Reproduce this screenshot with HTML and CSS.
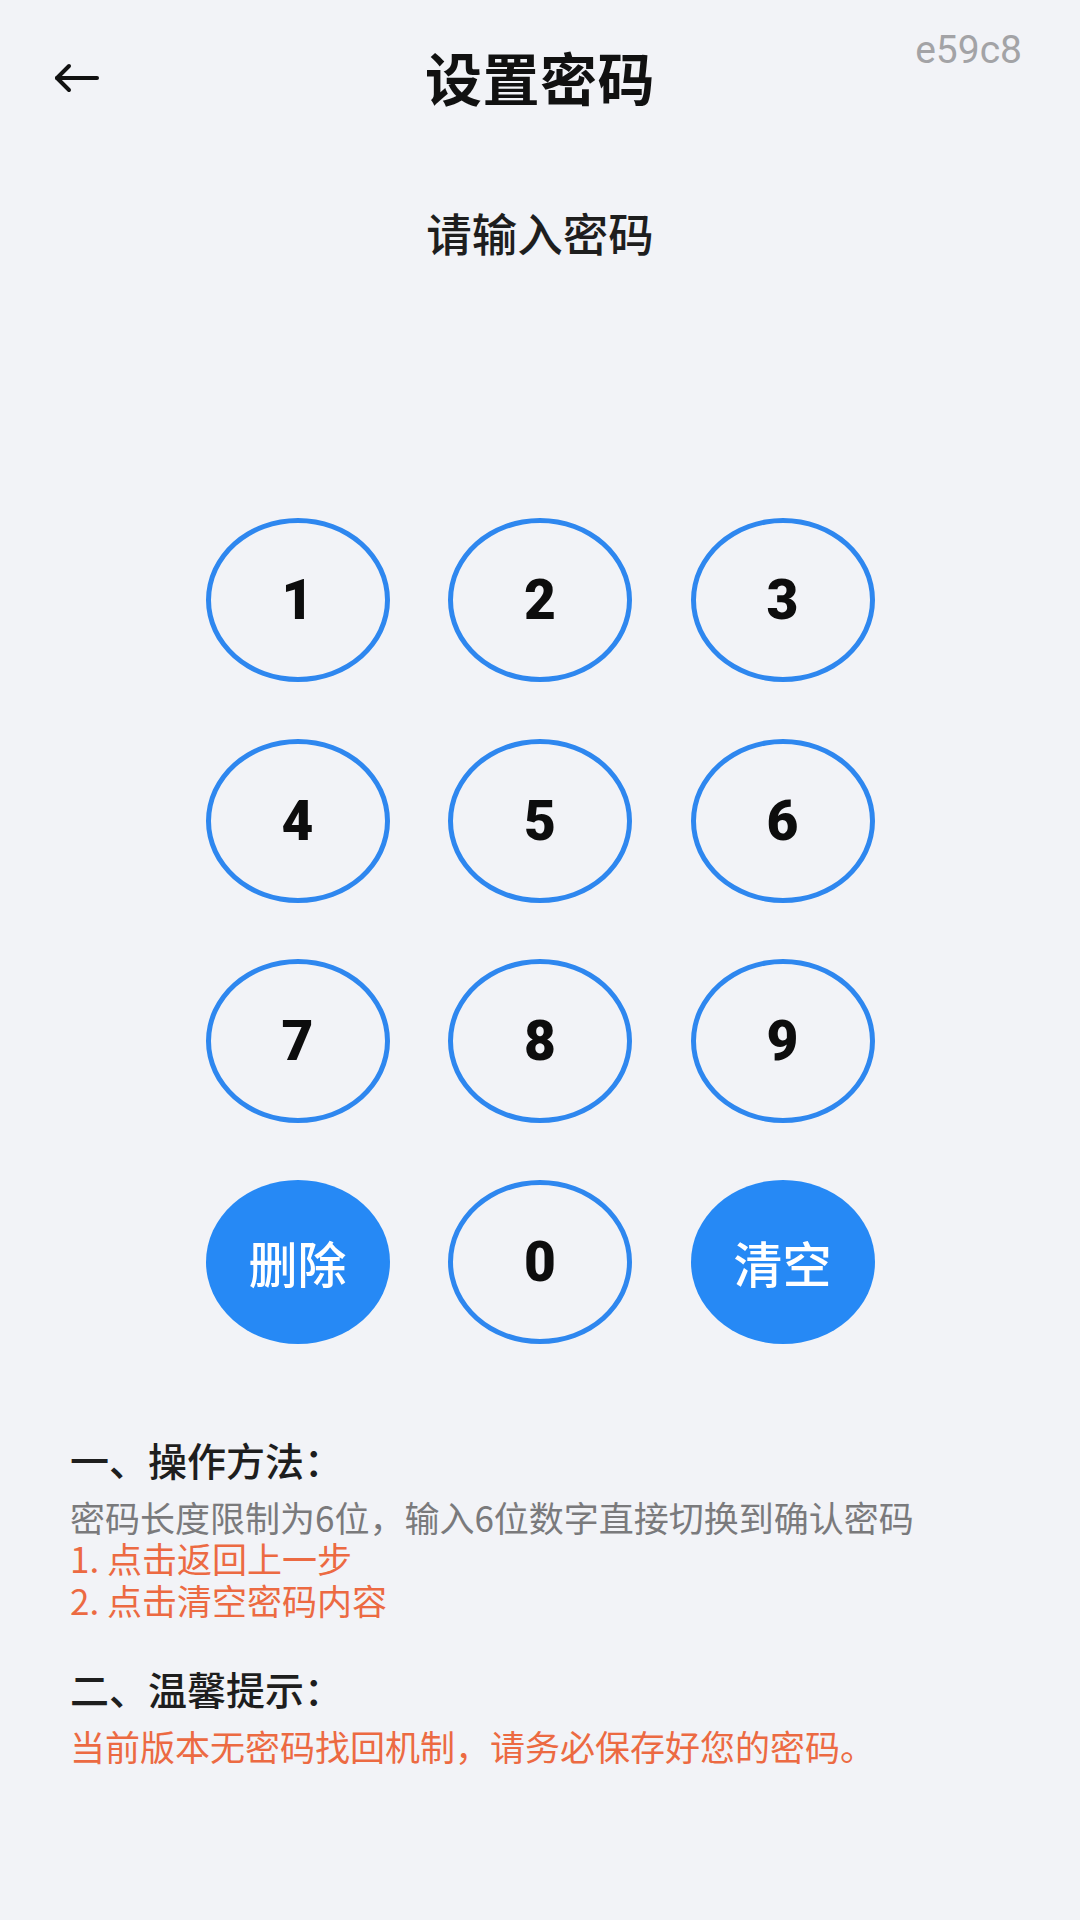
FILE: index.html
```html
<!DOCTYPE html>
<html lang="zh-CN">
<head>
<meta charset="utf-8">
<title>设置密码</title>
<link rel="stylesheet" href="styles.css">
</head>
<body>
<div class="page">
  <header class="topbar">
    <button class="back" aria-label="返回">
      <svg width="46" height="30" viewBox="0 0 46 30" fill="none" stroke="#111" stroke-width="4" stroke-linecap="round" stroke-linejoin="round">
        <path d="M44 15H4"/>
        <path d="M16 3L4 15L16 27"/>
      </svg>
    </button>
    <h1 class="title">设置密码</h1>
    <span class="spacer"></span>
    <span class="code">e59c8</span>
  </header>

  <p class="prompt">请输入密码</p>

  <div class="keypad">
    <button class="key">1</button>
    <button class="key">2</button>
    <button class="key">3</button>
    <button class="key">4</button>
    <button class="key">5</button>
    <button class="key">6</button>
    <button class="key">7</button>
    <button class="key">8</button>
    <button class="key">9</button>
    <button class="key key-action">删除</button>
    <button class="key">0</button>
    <button class="key key-action">清空</button>
  </div>

  <section class="notes">
    <h2 class="note-head">一、操作方法：</h2>
    <p class="note-line gray">密码长度限制为6位，输入6位数字直接切换到确认密码</p>
    <p class="note-line orange">1. 点击返回上一步</p>
    <p class="note-line orange">2. 点击清空密码内容</p>
    <h2 class="note-head second">二、温馨提示：</h2>
    <p class="note-line orange tip">当前版本无密码找回机制，请务必保存好您的密码。</p>
  </section>
</div>
</body>
</html>
```

FILE: styles.css
```css
* {
  box-sizing: border-box;
}

html, body {
  margin: 0;
  padding: 0;
  background: #f2f3f7;
}

body {
  width: 1080px;
  min-height: 1920px;
  font-family: "Noto Sans CJK SC", "Noto Sans", Roboto, sans-serif;
  color: #1a1a1a;
}

.page {
  position: relative;
  width: 1080px;
  min-height: 1920px;
}

.topbar {
  position: relative;
  height: 162px;
  display: grid;
  grid-template-columns: 180px 1fr 180px;
  align-items: center;
}

.back {
  justify-self: start;
  margin-left: 53px;
  margin-top: -6px;
  padding: 0;
  border: none;
  background: transparent;
  display: flex;
}

.title {
  margin: 0 0 10px;
  text-align: center;
  font-size: 57px;
  font-weight: 700;
  line-height: 1;
  color: #111;
  letter-spacing: 0.5px;
}

.code {
  position: absolute;
  top: 25px;
  right: 58px;
  font-family: Roboto, "Liberation Sans", sans-serif;
  font-size: 39px;
  color: #a3a3a6;
  line-height: 50px;
}

.prompt {
  margin: 40px 0 0;
  height: 60px;
  line-height: 60px;
  text-align: center;
  font-size: 45.5px;
  font-weight: 500;
  color: #1e1e1e;
}

.keypad {
  margin: 256px auto 0;
  width: 669px;
  display: grid;
  grid-template-columns: repeat(3, 184px);
  grid-auto-rows: 164px;
  column-gap: 58.5px;
  row-gap: 56.5px;
}

.key {
  width: 184px;
  height: 164px;
  border-radius: 50%;
  border: 5px solid #2e87ef;
  background: transparent;
  display: flex;
  align-items: center;
  justify-content: center;
  padding: 0;
  font-family: Roboto, "Liberation Sans", sans-serif;
  font-weight: 900;
  font-size: 55px;
  color: #0d0d0d;
}

.key-action {
  border: none;
  background: #2689f5;
  color: #fff;
  font-family: "Noto Sans CJK SC", sans-serif;
  font-weight: 500;
  font-size: 49px;
}

.notes {
  margin-top: 90px;
  padding-left: 70px;
}

.note-head {
  margin: 0;
  font-size: 39px;
  font-weight: 500;
  line-height: 50px;
  color: #1e1e1e;
}

.note-head.second {
  margin-top: 43px;
}

.note-line {
  margin: 0;
  font-size: 35px;
  line-height: 41.5px;
}

.note-head + .note-line {
  margin-top: 12px;
}

.gray {
  color: #7a7a7c;
}

.orange {
  color: #ec6a42;
}
```
